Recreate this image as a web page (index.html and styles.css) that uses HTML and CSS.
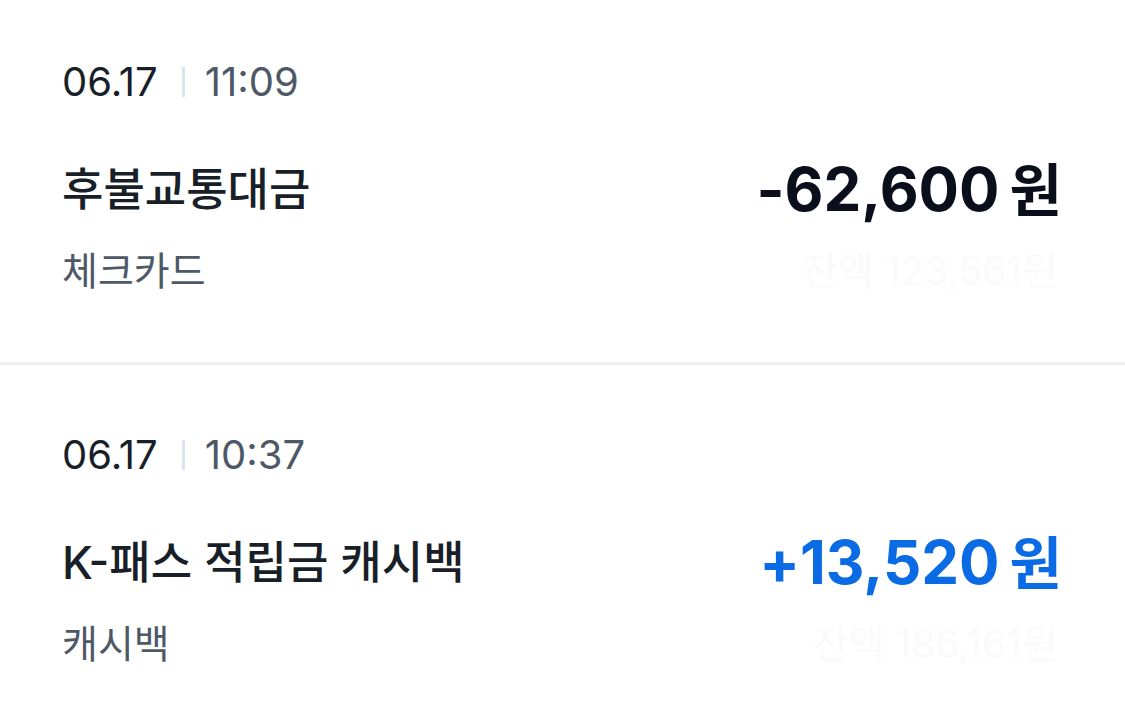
FILE: index.html
```html
<!DOCTYPE html>
<html lang="ko">
<head>
    <meta charset="UTF-8">
    <meta name="viewport" content="width=device-width, initial-scale=1.0">
    <title>거래내역</title>
    <link rel="stylesheet" href="styles.css">
</head>
<body>

    <ul class="tx-list">
        <!-- 후불교통대금 -->
        <li class="tx">
            <div class="tx-date">
                <span>06.17</span>
                <i class="tx-sep"></i>
                <span class="tx-time">11:09</span>
            </div>
            <div class="tx-main">
                <span class="tx-title">후불교통대금</span>
                <span class="tx-amount">-62,600<span class="won">원</span></span>
            </div>
            <div class="tx-sub">
                <span>체크카드</span>
                <span class="tx-balance">잔액 123,561원</span>
            </div>
        </li>

        <!-- K-패스 캐시백 -->
        <li class="tx">
            <div class="tx-date">
                <span>06.17</span>
                <i class="tx-sep"></i>
                <span class="tx-time">10:37</span>
            </div>
            <div class="tx-main">
                <span class="tx-title">K-패스 적립금 캐시백</span>
                <span class="tx-amount plus">+13,520<span class="won">원</span></span>
            </div>
            <div class="tx-sub">
                <span>캐시백</span>
                <span class="tx-balance">잔액 186,161원</span>
            </div>
        </li>
    </ul>

</body>
</html>
```

FILE: styles.css
```css
body {
    margin: 0;
    background: #fff;
    font-family: Inter, "Noto Sans CJK KR", sans-serif;
    color: #191f28;
}
.tx-list {
    list-style: none;
    margin: 0;
    padding: 0;
}
.tx {
    padding: 58px 63px 0 62px;
    height: 304px;
    border-bottom: 3px solid #eef0f6;
}
.tx + .tx {
    padding-top: 66px;
    border-bottom: none;
}
.tx-date {
    display: flex;
    align-items: center;
    font-size: 40px;
    line-height: 48px;
    color: #191f28;
}
.tx-sep {
    width: 3px;
    height: 30px;
    margin: 0 20px 0 24px;
    background: #dde3ee;
}
.tx-time {
    color: #4e5968;
}
.tx-main {
    display: flex;
    justify-content: space-between;
    align-items: center;
    margin-top: 40px;
    height: 80px;
}
.tx-title {
    font-size: 45px;
    font-weight: 500;
    color: #191f28;
}
.tx-amount {
    font-size: 60px;
    font-weight: 700;
    color: #0b0f1c;
}
.tx-amount.plus {
    color: #0b6be4;
}
.won {
    margin-left: 10px;
    font-size: 57px;
}
.tx-sub {
    display: flex;
    justify-content: space-between;
    align-items: center;
    margin-top: 14px;
    font-size: 39px;
    color: #4e5968;
}
.tx-balance {
    color: #fafafb;
    padding-right: 4px;
}
```
